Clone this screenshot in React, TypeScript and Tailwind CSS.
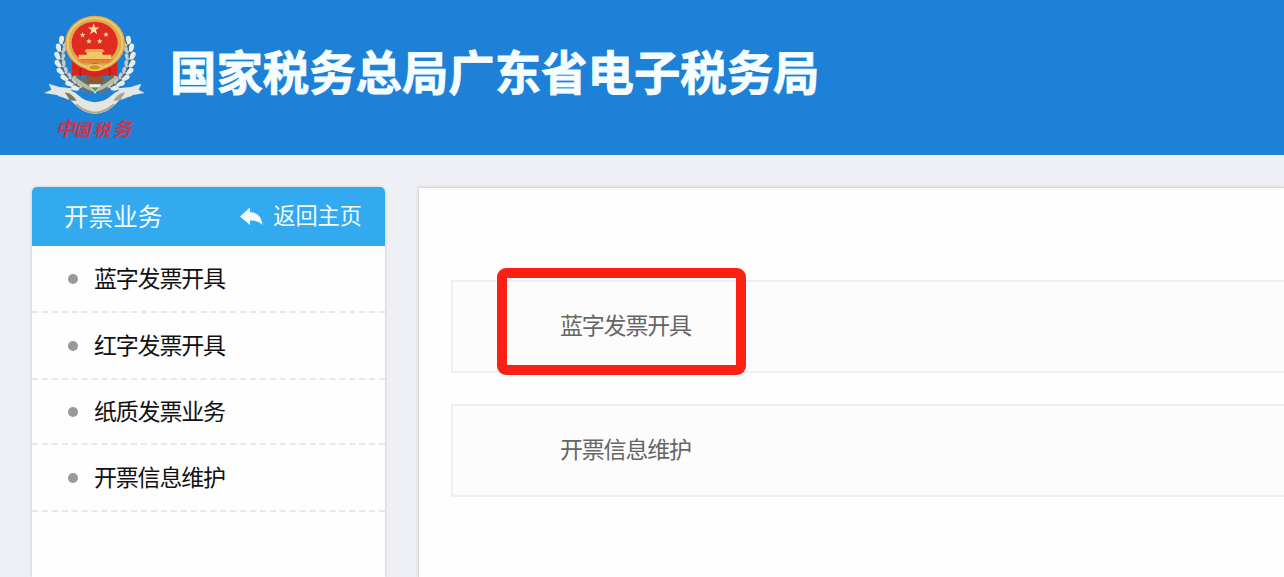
import React from "react";

const menus = [
  { title: "蓝字发票开具", height: "h-[67px]" },
  { title: "红字发票开具", height: "h-[67px]" },
  { title: "纸质发票业务", height: "h-[65px]" },
  { title: "开票信息维护", height: "h-[67px]" },
];

const services = [
  { title: "蓝字发票开具", active: true },
  { title: "开票信息维护", active: false },
];

// left half of the wheat wreath, mirrored for the right side
const leaves = [
  { x: 101, y: 105, r: 25 },
  { x: 92, y: 126, r: 5 },
  { x: 88, y: 149, r: -8 },
  { x: 89, y: 172, r: -18 },
  { x: 95, y: 194, r: -28 },
  { x: 106, y: 213, r: -38 },
  { x: 120, y: 230, r: -48 },
  { x: 137, y: 243, r: -56 },
];

const Wreath = () => (
  <g>
    <path d="M110 108 C88 150 96 210 150 250 L186 264" fill="none" stroke="#5d7480" strokeWidth="9" />
    {leaves.map((leaf, index) => (
      <g key={index} transform={`translate(${leaf.x} ${leaf.y}) rotate(${leaf.r})`}>
        <ellipse cx="-6" cy="0" rx="8" ry="13" fill="#e6eded" transform="rotate(-24)" />
        <ellipse cx="12" cy="3" rx="6" ry="11" fill="#c3cccb" transform="rotate(24)" />
        <path d="M2 -7 L4 11" stroke="#4d6470" strokeWidth="4" />
      </g>
    ))}
    <path d="M130 214 Q156 242 190 254" fill="none" stroke="#b9bba6" strokeWidth="12" />
    <path d="M140 214 Q164 232 190 242" fill="none" stroke="#6d6f55" strokeWidth="8" />
  </g>
);

const Star = ({ x, y, s }: { x: number; y: number; s: number }) => (
  <path
    transform={`translate(${x} ${y}) scale(${s})`}
    d="M0 -10 L2.4 -3.2 L9.5 -3.1 L3.8 1.2 L5.9 8.1 L0 4 L-5.9 8.1 L-3.8 1.2 L-9.5 -3.1 L-2.4 -3.2 Z"
    fill="#ffe0a0"
  />
);

const Logo = () => (
  <svg className="h-[150px] w-[130px] shrink-0" viewBox="0 0 390 450">
    <Wreath />
    <g transform="translate(390 0) scale(-1 1)">
      <Wreath />
    </g>
    {/* emblem */}
    <path d="M126 168 L126 213 Q160 204 195 220 Q230 204 262 213 L262 168 Z" fill="#d9261c" />
    <ellipse cx="195" cy="114" rx="90" ry="82" fill="#deaa4c" />
    <ellipse cx="195" cy="114" rx="82" ry="75" fill="none" stroke="#efc873" strokeWidth="6" />
    <ellipse cx="194" cy="113" rx="69" ry="63" fill="#df2b21" />
    <Star x={191} y={73} s={1.8} />
    <Star x={158} y={90} s={0.9} />
    <Star x={228} y={89} s={0.9} />
    <Star x={177} y={109} s={0.9} />
    <Star x={209} y={109} s={0.9} />
    <path d="M169 132 L218 132 L224 141 L163 141 Z" fill="#e9b04a" />
    <path d="M170 141 H217 V149 H244 V162 H146 V149 H170 Z" fill="#f2c866" />
    <path d="M141 163 H249 L237 175 H153 Z" fill="#e0843a" />
    <ellipse cx="194" cy="188" rx="27" ry="11" fill="#f0c35c" />
    <ellipse cx="194" cy="187" rx="15" ry="6" fill="#d78b2c" />
    <path d="M152 190 Q148 205 152 213 M238 190 Q242 205 238 213" stroke="#b5150f" strokeWidth="4" fill="none" />
    <path d="M166 212 Q195 222 224 212 L216 238 H174 Z" fill="#8d5a35" />
    <path d="M176 238 H214 L195 266 Z" fill="#f1f4ef" />
    <path d="M183 247 H208 L195 260 Z" fill="#4aa54a" />
    {/* ribbon */}
    <path d="M56 236 L88 246 L126 250 L116 284 L80 270 L42 264 L64 254 Z" fill="#e0e5e5" />
    <path d="M334 236 L302 246 L264 250 L274 284 L310 270 L344 264 L326 254 Z" fill="#e0e5e5" />
    <path
      d="M82 254 Q122 248 144 270 Q164 290 195 292 Q226 290 246 270 Q268 248 308 254 L304 274 Q276 274 260 294 Q234 324 195 327 Q156 324 130 294 Q114 274 86 274 Z"
      fill="#e6e6e1"
    />
    <path d="M104 262 Q128 266 140 288 L120 286 Z" fill="#777766" />
    <path d="M286 262 Q262 266 250 288 L270 286 Z" fill="#a5a597" />
    <path d="M138 298 Q164 322 195 323 Q226 322 252 298" fill="none" stroke="#aba996" strokeWidth="6" />
    <text
      y="394"
      fontFamily='"Noto Sans CJK SC", sans-serif'
      fontStyle="italic"
      fontWeight="700"
      fill="#cf3345"
    >
      <tspan x="76" fontSize="60">中</tspan>
      <tspan x="132" fontSize="50">国</tspan>
      <tspan x="190" fontSize="50">税</tspan>
      <tspan x="248" fontSize="56">务</tspan>
    </text>
  </svg>
);

const App = () => {
  return (
    <div className="flex h-[577px] w-[1284px] flex-col overflow-hidden bg-[#eff0f5] font-['Noto_Sans_CJK_SC',sans-serif]">
      <header className="flex h-[155px] shrink-0 bg-[#1d81d7] pt-[5px] pl-[30px]">
        <Logo />
        <h1 className="ml-[10px] pt-[31px] text-[46.4px] leading-[68px] font-bold whitespace-nowrap text-[#f5fdff] [-webkit-text-stroke:0.8px_#f5fdff]">
          国家税务总局广东省电子税务局
        </h1>
      </header>

      <div className="flex min-h-0 flex-1 gap-[33px] pt-8 pl-8">
        <aside className="w-[353px] shrink-0 rounded-t-[5px] bg-[#fefefe] shadow-[0_0_3px_rgba(0,0,0,0.2)]">
          <div className="flex h-[59px] items-center justify-between rounded-t-[5px] bg-[#33a9f0] pr-[23px] pl-8 text-[#f2fcff]">
            <span className="pb-0.5 text-[24.6px] leading-none">开票业务</span>
            <a className="flex items-center gap-[10px] pb-1">
              <svg className="mt-1 h-5 w-6" viewBox="0 0 24 20" fill="currentColor">
                <path d="M1 9.5 L11 0.5 V5 C18 5.5 22.5 9 23.5 18 C19.5 14.2 16 13.6 11 13.6 V18 Z" />
              </svg>
              <span className="text-[22.2px] leading-none">返回主页</span>
            </a>
          </div>
          <ul>
            {menus.map((item, index) => (
              <li
                key={index}
                className={`flex items-center border-b-2 border-dashed border-[#e8e7e9] pl-9 ${item.height}`}
              >
                <span className="mr-[16px] h-[10px] w-[10px] rounded-full bg-[#999]" />
                <span className="pb-0.5 text-[23px] leading-none tracking-[-1.2px] text-[#111]">{item.title}</span>
              </li>
            ))}
          </ul>
        </aside>

        <main className="flex flex-1 flex-col gap-[31px] border-t border-l border-[#d8dbdb] bg-[#fefefe] pt-[92px] pl-8 shadow-[0_0_3px_rgba(0,0,0,0.12)]">
          {services.map((item, index) => (
            <div
              key={index}
              className="relative flex h-[93px] items-center border-2 border-r-0 border-[#eeefef] bg-[#fcfcfc] pl-[107px]"
            >
              <span className="pb-1 text-[23px] leading-none tracking-[-1.2px] text-[#666]">{item.title}</span>
              {item.active && (
                <div className="absolute top-[-14px] left-[44px] h-[107px] w-[249px] rounded-[9px] border-[10px] border-[#fa2114]" />
              )}
            </div>
          ))}
        </main>
      </div>
    </div>
  );
};

export default App;
